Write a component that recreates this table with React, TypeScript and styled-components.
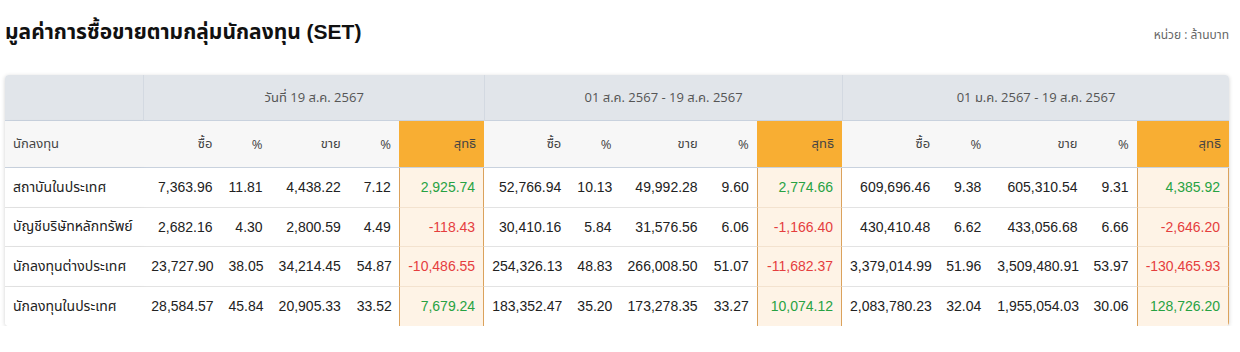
import React from "react";
import styled, { createGlobalStyle } from "styled-components";

const GlobalStyle = createGlobalStyle`
  body {
    margin: 0;
    background: #fff;
    font-family: "Liberation Sans", "Noto Sans Thai", "Noto Sans", sans-serif;
    color: #222;
  }
`;

const headFont = `"Open Sans", "Noto Sans", "Noto Sans Thai", sans-serif`;

const Page = styled.div`
  padding: 17px 11px 0 5px;
`;

const TitleBar = styled.div`
  display: flex;
  align-items: baseline;
  justify-content: space-between;
  height: 33px;
`;

const Title = styled.h1`
  margin: 0;
  font-size: 21px;
  font-weight: 700;
  color: #111;
`;

const Unit = styled.span`
  font-family: ${headFont};
  font-size: 12px;
  color: #666;
`;

const Card = styled.div`
  margin-top: 25px;
  border-radius: 4px;
  overflow: hidden;
  box-shadow: 0 1px 4px rgba(0, 0, 0, 0.18);
`;

const Table = styled.table`
  width: 100%;
  border-collapse: separate;
  border-spacing: 0;
  table-layout: fixed;
  font-size: 14px;
`;

const GroupHead = styled.th`
  height: 45px;
  background: #e1e5ea;
  font-family: ${headFont};
  font-weight: 400;
  font-size: 13px;
  color: #555;
  text-align: center;
  border-bottom: 1px solid #c9d2de;
  border-left: 1px solid #d3d9e1;
  padding: 0;
`;

const StickyHead = styled.th`
  background: #e1e5ea;
  border-bottom: 1px solid #c9d2de;
  box-shadow: 3px 0 5px -2px rgba(0, 0, 0, 0.08);
  padding: 0;
`;

const ColHead = styled.th<{ $net?: boolean; $left?: boolean }>`
  height: 46px;
  padding: 0 8px;
  font-family: ${headFont};
  font-weight: 400;
  font-size: 13px;
  color: #444;
  text-align: ${(p) => (p.$left ? "left" : "right")};
  background: ${(p) => (p.$net ? "#f8ae33" : "#f7f7f7")};
  border-bottom: 1px solid #c9d2de;
  box-shadow: ${(p) => (p.$left ? "3px 0 5px -2px rgba(0,0,0,0.08)" : "none")};
`;

const Row = styled.tr`
  height: 39.5px;
`;

const NameCell = styled.td`
  padding: 0 8px;
  text-align: left;
  background: #fff;
  white-space: nowrap;
  border-bottom: 1px solid #e3e3e3;
  box-shadow: 3px 0 5px -2px rgba(0, 0, 0, 0.08);
  ${Row}:last-child & {
    border-bottom: none;
  }
`;

const NumCell = styled.td<{ $net?: boolean; $tone?: "up" | "down" }>`
  padding: 0 8px;
  text-align: right;
  white-space: nowrap;
  background: ${(p) => (p.$net ? "#fef3e6" : "#fff")};
  color: ${(p) => (p.$tone === "up" ? "#27a243" : p.$tone === "down" ? "#e53e3e" : "#222")};
  border-bottom: 1px solid ${(p) => (p.$net ? "#f3e2cf" : "#e3e3e3")};
  border-left: ${(p) => (p.$net ? "1px solid #dba25c" : "none")};
  border-right: ${(p) => (p.$net ? "1px solid #dba25c" : "none")};
  ${Row}:last-child & {
    border-bottom: none;
  }
`;

type Group = [string, string, string, string, string];

const periods = ["วันที่ 19 ส.ค. 2567", "01 ส.ค. 2567 - 19 ส.ค. 2567", "01 ม.ค. 2567 - 19 ส.ค. 2567"];

const widths = [138, 77, 50, 78, 50, 85, 85, 50, 86, 51, 85, 96, 51, 96, 51, 92];

const rows: { name: string; groups: Group[] }[] = [
  {
    name: "สถาบันในประเทศ",
    groups: [
      ["7,363.96", "11.81", "4,438.22", "7.12", "2,925.74"],
      ["52,766.94", "10.13", "49,992.28", "9.60", "2,774.66"],
      ["609,696.46", "9.38", "605,310.54", "9.31", "4,385.92"],
    ],
  },
  {
    name: "บัญชีบริษัทหลักทรัพย์",
    groups: [
      ["2,682.16", "4.30", "2,800.59", "4.49", "-118.43"],
      ["30,410.16", "5.84", "31,576.56", "6.06", "-1,166.40"],
      ["430,410.48", "6.62", "433,056.68", "6.66", "-2,646.20"],
    ],
  },
  {
    name: "นักลงทุนต่างประเทศ",
    groups: [
      ["23,727.90", "38.05", "34,214.45", "54.87", "-10,486.55"],
      ["254,326.13", "48.83", "266,008.50", "51.07", "-11,682.37"],
      ["3,379,014.99", "51.96", "3,509,480.91", "53.97", "-130,465.93"],
    ],
  },
  {
    name: "นักลงทุนในประเทศ",
    groups: [
      ["28,584.57", "45.84", "20,905.33", "33.52", "7,679.24"],
      ["183,352.47", "35.20", "173,278.35", "33.27", "10,074.12"],
      ["2,083,780.23", "32.04", "1,955,054.03", "30.06", "128,726.20"],
    ],
  },
];

const App = () => {
  return (
    <>
      <GlobalStyle />
      <Page>
        <TitleBar>
          <Title>มูลค่าการซื้อขายตามกลุ่มนักลงทุน (SET)</Title>
          <Unit>หน่วย : ล้านบาท</Unit>
        </TitleBar>
        <Card>
          <Table>
            <colgroup>
              {widths.map((w, i) => (
                <col key={i} style={{ width: w }} />
              ))}
            </colgroup>
            <thead>
              <tr>
                <StickyHead />
                {periods.map((p) => (
                  <GroupHead key={p} colSpan={5}>
                    {p}
                  </GroupHead>
                ))}
              </tr>
              <tr>
                <ColHead $left>นักลงทุน</ColHead>
                {periods.map((p) => (
                  <React.Fragment key={p}>
                    <ColHead>ซื้อ</ColHead>
                    <ColHead>%</ColHead>
                    <ColHead>ขาย</ColHead>
                    <ColHead>%</ColHead>
                    <ColHead $net>สุทธิ</ColHead>
                  </React.Fragment>
                ))}
              </tr>
            </thead>
            <tbody>
              {rows.map((r) => (
                <Row key={r.name}>
                  <NameCell>{r.name}</NameCell>
                  {r.groups.map((g, gi) => (
                    <React.Fragment key={gi}>
                      <NumCell>{g[0]}</NumCell>
                      <NumCell>{g[1]}</NumCell>
                      <NumCell>{g[2]}</NumCell>
                      <NumCell>{g[3]}</NumCell>
                      <NumCell $net $tone={g[4].startsWith("-") ? "down" : "up"}>
                        {g[4]}
                      </NumCell>
                    </React.Fragment>
                  ))}
                </Row>
              ))}
            </tbody>
          </Table>
        </Card>
      </Page>
    </>
  );
};

export default App;
